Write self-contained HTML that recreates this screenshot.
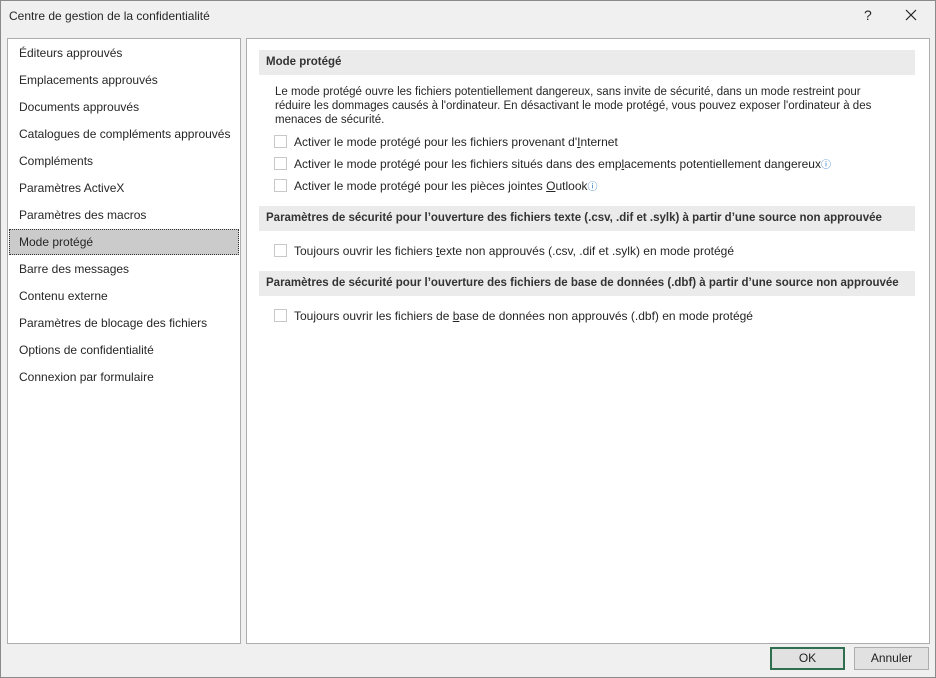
<!DOCTYPE html>
<html><head><meta charset="utf-8"><style>
*{margin:0;padding:0;box-sizing:border-box}
body{width:936px;height:678px;background:#f0f0f0;font-family:"Liberation Sans",sans-serif;font-size:12px;color:#262626;position:relative;overflow:hidden}
.frame{position:absolute;left:0;top:0;width:936px;height:678px;border:1px solid #8a8a8a;pointer-events:none}
.abs{position:absolute;white-space:nowrap}
.panel{position:absolute;background:#fff;border:1px solid #adadad}
.item{position:absolute;left:11px;line-height:14px}
.sel{position:absolute;left:1px;top:190px;width:230px;height:26px;background:#cbcbcb;border:1px dotted #333}
.hdr{position:absolute;left:12px;width:657px;height:25px;background:#ebebeb;font-weight:bold;padding-left:7px;line-height:25px;color:#333;font-size:11.5px}
.cb{position:absolute;width:13px;height:13px;border:1px solid #c8c8c8;background:#fff}
.t{position:absolute;white-space:nowrap;line-height:14px}
.btn{position:absolute;top:647px;height:23px;width:75px;border:1px solid #adadad;background:#e1e1e1;text-align:center;line-height:21px;color:#222}
.i{color:#2a74c9;font-size:10px}
</style></head><body>
<div class="abs" style="left:9px;top:9px">Centre de gestion de la confidentialité</div>
<div class="abs" style="left:864px;top:7px;font-size:14px">?</div>
<svg class="abs" style="left:905px;top:9px" width="12" height="12"><path d="M1 1L11 11M11 1L1 11" stroke="#222" stroke-width="1.2"/></svg>

<div class="panel" style="left:7px;top:38px;width:234px;height:606px">
<div class="sel"></div>
<div class="item" style="top:7px">Éditeurs approuvés</div>
<div class="item" style="top:34px">Emplacements approuvés</div>
<div class="item" style="top:61px">Documents approuvés</div>
<div class="item" style="top:88px">Catalogues de compléments approuvés</div>
<div class="item" style="top:115px">Compléments</div>
<div class="item" style="top:142px">Paramètres ActiveX</div>
<div class="item" style="top:169px">Paramètres des macros</div>
<div class="item" style="top:196px">Mode protégé</div>
<div class="item" style="top:223px">Barre des messages</div>
<div class="item" style="top:250px">Contenu externe</div>
<div class="item" style="top:277px">Paramètres de blocage des fichiers</div>
<div class="item" style="top:304px">Options de confidentialité</div>
<div class="item" style="top:331px">Connexion par formulaire</div>
</div>

<div class="panel" style="left:246px;top:38px;width:684px;height:606px">
<div class="hdr" style="top:11px;width:656px">Mode protégé</div>
<div class="t" style="left:28px;top:46px;font-size:11.5px">Le mode protégé ouvre les fichiers potentiellement dangereux, sans invite de sécurité, dans un mode restreint pour<br>réduire les dommages causés à l'ordinateur. En désactivant le mode protégé, vous pouvez exposer l'ordinateur à des<br>menaces de sécurité.</div>
<div class="cb" style="left:27px;top:96px"></div><div class="t" style="left:47px;top:96px">Activer le mode protégé pour les fichiers provenant d'<u>I</u>nternet</div>
<div class="cb" style="left:27px;top:118px"></div><div class="t" style="left:47px;top:118px">Activer le mode protégé pour les fichiers situés dans des emp<u>l</u>acements potentiellement dangereux<span class="i">ⓘ</span></div>
<div class="cb" style="left:27px;top:140px"></div><div class="t" style="left:47px;top:140px">Activer le mode protégé pour les pièces jointes <u>O</u>utlook<span class="i">ⓘ</span></div>
<div class="hdr" style="top:167px;width:656px">Paramètres de sécurité pour l’ouverture des fichiers texte (.csv, .dif et .sylk) à partir d’une source non approuvée</div>
<div class="cb" style="left:27px;top:205px"></div><div class="t" style="left:47px;top:205px">Toujours ouvrir les fichiers <u>t</u>exte non approuvés (.csv, .dif et .sylk) en mode protégé</div>
<div class="hdr" style="top:232px;width:656px">Paramètres de sécurité pour l’ouverture des fichiers de base de données (.dbf) à partir d’une source non approuvée</div>
<div class="cb" style="left:27px;top:270px"></div><div class="t" style="left:47px;top:270px">Toujours ouvrir les fichiers de <u>b</u>ase de données non approuvés (.dbf) en mode protégé</div>
</div>

<div class="btn" style="left:770px;border:2px solid #2f6f4f;line-height:19px">OK</div>
<div class="btn" style="left:854px">Annuler</div>
<div class="frame"></div>
</body></html>
